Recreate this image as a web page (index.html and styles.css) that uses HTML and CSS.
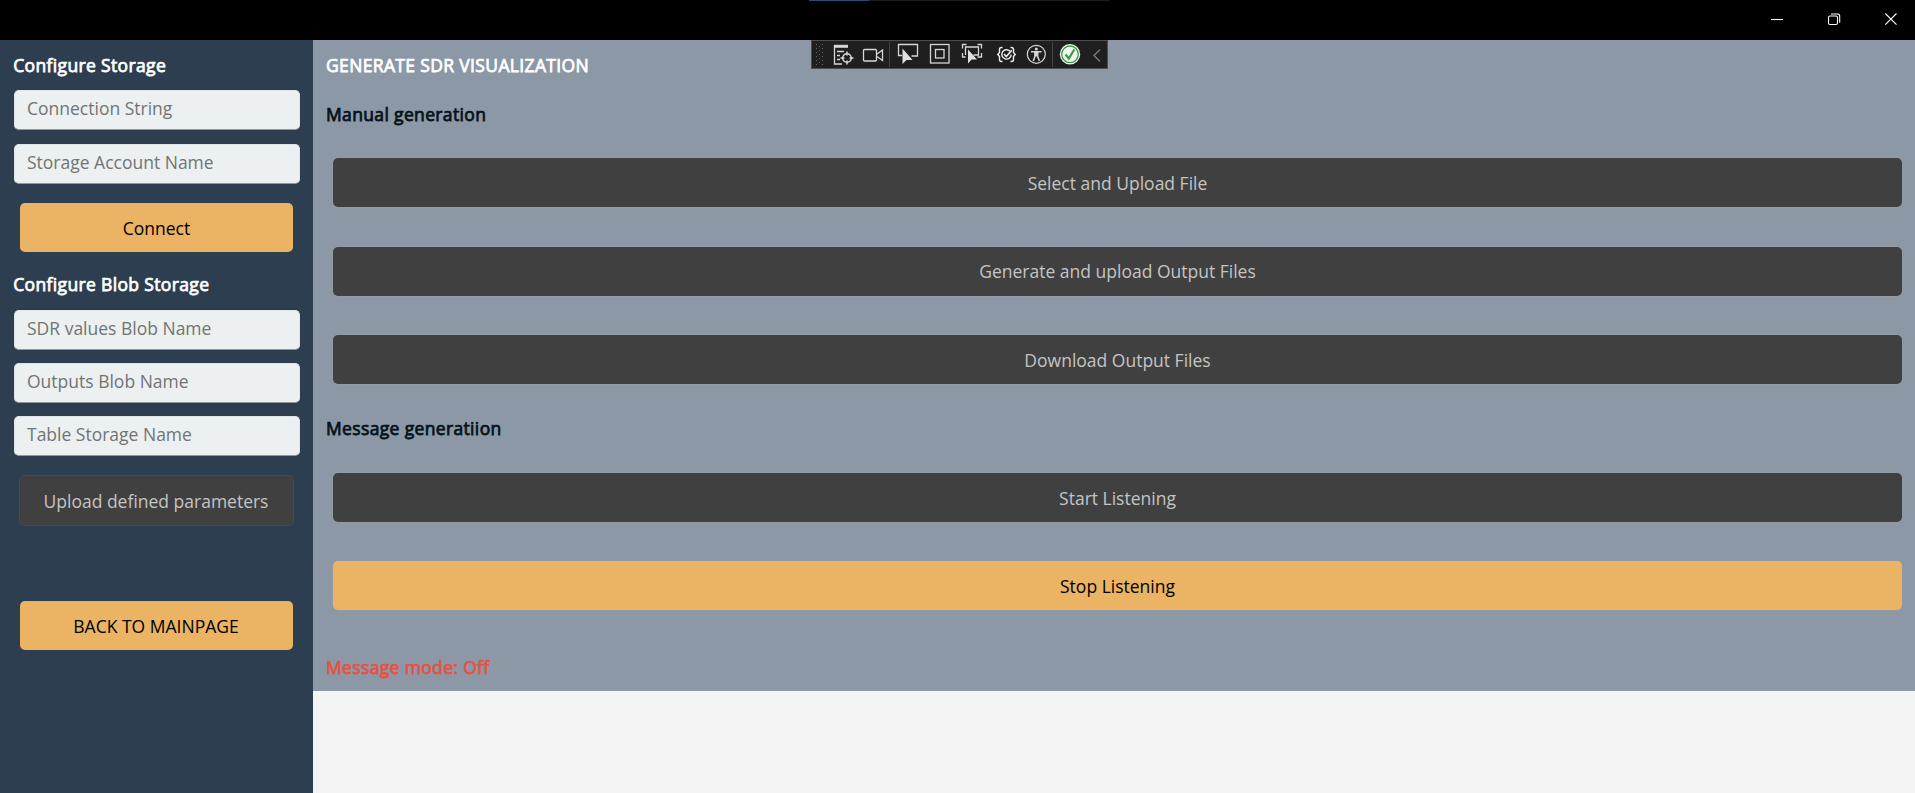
FILE: index.html
```html
<!DOCTYPE html>
<html lang="en">
<head>
<meta charset="utf-8">
<title>SDR Visualization</title>
<link rel="stylesheet" href="styles.css">
</head>
<body>
<header class="titlebar">
  <div class="accent"></div>
  <svg class="window-controls" width="140" height="40" viewBox="0 0 140 40" fill="none" stroke="#fff" stroke-width="1.1">
    <path d="M11 19.5h12"/>
    <rect x="68.500" y="16" width="9" height="8.500" rx="1.500"/>
    <path d="M71 14h6.500q2.200 0 2.200 2.200v6.600"/>
    <path d="M125.300 13.500l11.200 11.200M136.500 13.500l-11.200 11.200"/>
  </svg>
</header>
<div class="layout">
  <aside class="sidebar">
    <h2 class="heading light">Configure Storage</h2>
    <div class="fields">
      <input class="field" type="text" placeholder="Connection String">
      <input class="field" type="text" placeholder="Storage Account Name">
    </div>
    <button class="btn primary connect">Connect</button>
    <h2 class="heading light blob">Configure Blob Storage</h2>
    <div class="fields blob-fields">
      <input class="field" type="text" placeholder="SDR values Blob Name">
      <input class="field" type="text" placeholder="Outputs Blob Name">
      <input class="field" type="text" placeholder="Table Storage Name">
    </div>
    <button class="btn muted upload">Upload defined parameters</button>
    <button class="btn primary back">BACK TO MAINPAGE</button>
  </aside>
  <main class="content">
    <section class="panel">
      <h1 class="heading light">GENERATE SDR VISUALIZATION</h1>
      <h2 class="heading manual">Manual generation</h2>
      <div class="actions manual-actions">
        <button class="btn muted">Select and Upload File</button>
        <button class="btn muted">Generate and upload Output Files</button>
        <button class="btn muted">Download Output Files</button>
      </div>
      <h2 class="heading message">Message generatiion</h2>
      <div class="actions message-actions">
        <button class="btn muted">Start Listening</button>
        <button class="btn primary">Stop Listening</button>
      </div>
      <p class="heading status">Message mode: Off</p>
    </section>
  </main>
</div>
<div class="debugbar">
  <svg width="296" height="29" viewBox="0 0 296 29" fill="none" stroke="#d6d6d6" stroke-width="1.300">
    <g fill="#666" stroke="none">
      <path d="M4 4h1v1h-1zM10 4h1v1h-1zM7 6h1v1h-1zM4 8h1v1h-1zM10 8h1v1h-1zM7 10h1v1h-1zM4 12h1v1h-1zM10 12h1v1h-1zM7 14h1v1h-1zM4 16h1v1h-1zM10 16h1v1h-1zM7 18h1v1h-1zM4 20h1v1h-1zM10 20h1v1h-1zM7 22h1v1h-1zM4 24h1v1h-1zM10 24h1v1h-1z"/>
    </g>
    <path d="M22.500 5v19h7.500M25 11.500h7M25 15.500h3M25 19.500h3"/>
    <path d="M22 6.300h14" stroke-width="3"/>
    <circle cx="35" cy="18" r="4.300" stroke-width="1.600"/>
    <path d="M35 11.500v4M35 20.500v4M28.500 18h4M37.500 18h4" stroke-width="1.500"/>
    <rect x="51.500" y="9.500" width="13" height="11.500" rx="1"/>
    <path d="M65 14l5.500-4v10.500l-5.500-4"/>
    <path d="M77.500 2v25" stroke="#444" stroke-width="1"/>
    <path d="M90 15.500h-3.500v-11h19v11.500h-6"/>
    <path d="M90.500 8.500v15.500l4-4h6z" fill="#e0e0e0" stroke="none"/>
    <rect x="118.500" y="4.500" width="18.500" height="18.500"/>
    <rect x="123.500" y="9.500" width="8.500" height="8.500"/>
    <path d="M154.500 4.500h-4v4M165.500 4.500h4v4M169.500 13v4h-4M150.500 13v4h3M153.500 15v-8h13v8h-5"/>
    <path d="M156 9.500v14l3.500-4h5.500z" fill="#e0e0e0" stroke="none"/>
    <g stroke="#eee" stroke-width="1.400">
      <path d="M190.500 7.500h-1q-2 0-2 2v3l-1.700 2 1.700 2v3q0 2 2 2h1M198.500 7.500h1q2 0 2 2v3l1.700 2-1.700 2v3q0 2-2 2h-1"/>
      <path d="M198 11.300a4.700 4.700 0 1 0 1.200 3.200"/>
      <path d="M192 14l2.300 2.500 5.500-6.300" stroke-width="1.600"/>
    </g>
    <circle cx="224.300" cy="14.300" r="9" stroke-width="1.200"/>
    <circle cx="224.300" cy="9" r="1.500" fill="#d6d6d6" stroke="none"/>
    <path d="M219 11.800h10.600M222.900 12v4.500l-1.700 4.500M225.700 12v4.500l1.700 4.500M224.300 12v4.500" stroke-width="1.500"/>
    <path d="M240.500 2v25" stroke="#444" stroke-width="1"/>
    <circle cx="258" cy="14.300" r="10.200" fill="#f1f5f1" stroke="none"/>
    <circle cx="258" cy="14.300" r="8.300" stroke="#3a9a46" stroke-width="1.300"/>
    <path d="M253.500 14.500l3.300 4 5.500-9" stroke="#3a9a46" stroke-width="2.200"/>
    <path d="M288 9.500l-6 6 6 6" stroke="#777" stroke-width="1.500"/>
  </svg>
</div>
</body>
</html>
```
FILE: styles.css
```css
* { box-sizing: border-box; }

body {
  margin: 0;
  height: 793px;
  overflow: hidden;
  background: #f4f4f4;
  font-family: "Open Sans", sans-serif;
  font-size: 17.5px;
  line-height: 24px;
  color: #000;
}

.titlebar {
  height: 40px;
  background: #000;
  display: flex;
  justify-content: space-between;
}

.accent {
  width: 301px;
  height: 1px;
  margin-left: 809px;
  background: linear-gradient(to right, #26506f 60px, #191b1d 60px);
}

.window-controls { display: block; margin-right: 15px; }

.layout { display: flex; height: 753px; }

.sidebar {
  width: 313px;
  padding: 13px 13px 0 14px;
  background: #2d3e50;
  display: flex;
  flex-direction: column;
}

.content { flex: 1; }

.panel {
  height: 651px;
  padding: 13px 13px 0;
  background: #8c98a6;
  display: flex;
  flex-direction: column;
}

.heading {
  margin: 0;
  font-size: 17.5px;
  font-weight: 400;
  line-height: 24px;
  letter-spacing: 0.35px;
  color: #04121a;
  -webkit-text-stroke: 0.75px currentColor;
  white-space: nowrap;
}

.heading.light { color: #fff; }
.sidebar .heading { margin-left: -0.8px; }

.fields {
  display: flex;
  flex-direction: column;
  gap: 14px;
  margin-top: 13px;
}

.field {
  width: 286px;
  height: 40px;
  padding: 5px 12px 9px;
  border: 1px solid #dfe4e6;
  border-bottom-color: #8e979e;
  border-radius: 5px;
  background: #ecf0f1;
  font: inherit;
}

.field::placeholder { color: #717475; opacity: 1; }

.btn {
  display: block;
  height: 49px;
  padding: 0;
  border: 0;
  border-radius: 5px;
  font: inherit;
  text-align: center;
}

.primary { background: #eab464; color: #000; }
.muted { background: #404040; color: #c4c4c4; }

.sidebar .btn { margin-left: 6px; width: 273px; flex-shrink: 0; }
.sidebar .connect { margin-top: 19px; }
.blob { margin-top: 20px; }
.blob-fields { gap: 13px; margin-top: 14px; }
.sidebar .upload {
  width: 275px;
  height: 51px;
  margin: 19px 0 0 5px;
  padding-right: 1px;
  border: 1px solid #474a4d;
}
.sidebar .back { margin-top: 75px; padding-right: 1px; }

.manual { margin-top: 25px; }

.actions {
  display: flex;
  flex-direction: column;
  padding-left: 7px;
}

.actions .btn { width: 1569px; box-shadow: 0 0 0 1px #929ba4; }
.manual-actions { gap: 39.5px; margin-top: 32px; }
.message { margin-top: 32px; }
.message-actions { gap: 39px; margin-top: 33px; }
.status { margin-top: 45px; color: #e35345; }

.debugbar {
  position: absolute;
  left: 811px;
  top: 40px;
  width: 297px;
  height: 29px;
  background: #1f1f1f;
  border: 1px solid #4c4f52;
}

.debugbar svg { display: block; margin-top: -1px; }
```
